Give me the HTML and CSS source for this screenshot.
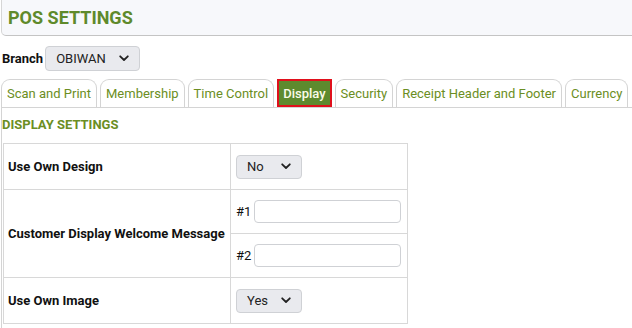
FILE: index.html
```html
<!DOCTYPE html>
<html lang="en">

<head>
    <meta charset="UTF-8">
    <meta name="viewport" content="width=device-width, initial-scale=1.0">
    <title>POS Settings</title>
    <link rel="stylesheet" href="styles.css">
</head>

<body>
    <!-- Page Header -->
    <div class="page-header">
        <h1>POS SETTINGS</h1>
    </div>

    <!-- Branch Picker -->
    <div class="branch-row">
        <span class="branch-label">Branch</span>
        <div class="fake-select branch-select">
            <span>OBIWAN</span>
            <svg class="chevron" width="10" height="7" viewBox="0 0 10 7"><path d="M1.2 1.3 L5 5 L8.8 1.3" fill="none" stroke="#222" stroke-width="1.8" stroke-linecap="round" stroke-linejoin="round"/></svg>
        </div>
    </div>

    <!-- Tabs -->
    <ul class="tabs">
        <li class="tab">Scan and Print</li>
        <li class="tab">Membership</li>
        <li class="tab">Time Control</li>
        <li class="tab active">Display</li>
        <li class="tab">Security</li>
        <li class="tab">Receipt Header and Footer</li>
        <li class="tab">Currency</li>
    </ul>

    <!-- Display Settings -->
    <div class="tab-pane">
        <h2>DISPLAY SETTINGS</h2>
        <table class="settings-table">
            <tr>
                <th>Use Own Design</th>
                <td>
                    <div class="fake-select small-select">
                        <span>No</span>
                        <svg class="chevron" width="10" height="7" viewBox="0 0 10 7"><path d="M1.2 1.3 L5 5 L8.8 1.3" fill="none" stroke="#222" stroke-width="1.8" stroke-linecap="round" stroke-linejoin="round"/></svg>
                    </div>
                </td>
            </tr>
            <tr>
                <th rowspan="2">Customer Display Welcome Message</th>
                <td>
                    <div class="msg-field"><label for="msg1">#1</label><input type="text" id="msg1"></div>
                </td>
            </tr>
            <tr>
                <td>
                    <div class="msg-field"><label for="msg2">#2</label><input type="text" id="msg2"></div>
                </td>
            </tr>
            <tr>
                <th>Use Own Image</th>
                <td>
                    <div class="fake-select small-select">
                        <span>Yes</span>
                        <svg class="chevron" width="10" height="7" viewBox="0 0 10 7"><path d="M1.2 1.3 L5 5 L8.8 1.3" fill="none" stroke="#222" stroke-width="1.8" stroke-linecap="round" stroke-linejoin="round"/></svg>
                    </div>
                </td>
            </tr>
        </table>
    </div>
</body>

</html>
```

FILE: styles.css
```css
/* Base Styles */
* {
    margin: 0;
    padding: 0;
    box-sizing: border-box;
    font-family: Roboto, 'Liberation Sans', sans-serif;
}

body {
    background-color: #ffffff;
    color: #111;
    font-size: 13px;
    height: 328px;
    overflow: hidden;
}

/* Page Header */
.page-header {
    height: 36px;
    margin-left: 1px;
    margin-right: -10px;
    background-color: #f7f8fb;
    border: 1px solid #d6d6d6;
    border-top: none;
    border-bottom-color: #c4c4c4;
    border-bottom-left-radius: 5px;
}

.page-header h1 {
    font-size: 18px;
    font-weight: 700;
    line-height: 35px;
    color: #5f8a2b;
    padding-left: 6px;
}

/* Branch Picker */
.branch-row {
    display: flex;
    align-items: center;
    margin-top: 10px;
    padding-left: 2px;
    height: 25px;
}

.branch-label {
    font-weight: 700;
    font-size: 13px;
    margin-right: 2px;
}

.fake-select {
    display: flex;
    align-items: center;
    justify-content: space-between;
    background-color: #e9eaee;
    border: 1px solid #cfd1d5;
    border-radius: 4px;
    color: #222;
    font-size: 13px;
}

.branch-select {
    width: 95px;
    height: 25px;
    padding: 0 10px 0 10px;
}

.chevron {
    display: block;
}

/* Tabs */
.tabs {
    display: flex;
    list-style: none;
    margin-top: 8px;
    padding-left: 1px;
    gap: 3px;
}

.tab {
    height: 28px;
    line-height: 27px;
    padding: 0 5px;
    border: 1px solid #d4d4d4;
    border-bottom: none;
    border-radius: 9px 9px 0 0;
    color: #6b8e23;
    font-size: 13px;
    white-space: nowrap;
}

.tab.active {
    background-color: #5d8a2e;
    color: #fbfbe8;
    border: 2px solid #e0101c;
    border-radius: 0;
    line-height: 25px;
    padding: 0 4px;
    font-weight: 500;
}

/* Tab Pane */
.tab-pane {
    margin-left: 1px;
    border-left: 1px solid #d4d4d4;
    border-top: 1px solid #d4d4d4;
    padding-top: 9px;
    height: 221px;
}

.tab-pane h2 {
    font-size: 13px;
    font-weight: 700;
    color: #6b8e23;
    line-height: 15px;
    margin-bottom: 11px;
}

/* Settings Table */
.settings-table {
    border-collapse: collapse;
    margin-left: 1px;
    width: 405px;
}

.settings-table th,
.settings-table td {
    border: 1px solid #d8d8d8;
    vertical-align: middle;
}

.settings-table th {
    width: 227px;
    text-align: left;
    font-size: 13px;
    font-weight: 700;
    padding-left: 4px;
    height: 46px;
}

.settings-table td {
    padding-left: 5px;
    height: 44px;
}

.small-select {
    width: 66px;
    height: 24px;
    padding: 0 10px 0 10px;
}

.msg-field {
    display: flex;
    align-items: center;
    gap: 3px;
}

.msg-field label {
    font-size: 13px;
    color: #111;
}

.msg-field input {
    width: 147px;
    height: 23px;
    border: 1px solid #cfd1d5;
    border-radius: 4px;
    font-size: 13px;
}
```
